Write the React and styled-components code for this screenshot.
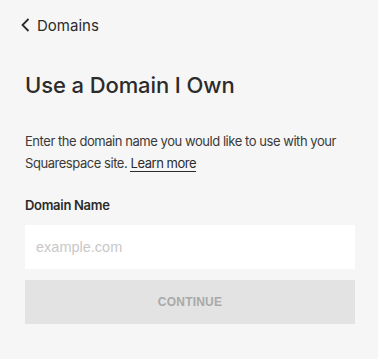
import React from "react";
import styled, { createGlobalStyle } from "styled-components";

const GlobalStyle = createGlobalStyle`
  html, body {
    margin: 0;
    padding: 0;
    background: #f6f6f6;
  }
  body {
    font-family: Inter, "Noto Sans", sans-serif;
    color: #2b2b2b;
  }
`;

const Page = styled.div`
  width: 378px;
  height: 359px;
  box-sizing: border-box;
  padding: 0 23px 0 25px;
  background: #f6f6f6;
`;

const BackLink = styled.a`
  display: flex;
  align-items: center;
  gap: 6px;
  margin-left: -6px;
  padding-top: 14px;
  height: 22px;
  font-size: 15px;
  color: #2b2b2b;
  text-decoration: none;
  cursor: pointer;
`;

const Title = styled.h1`
  margin: 34px 0 0;
  font-size: 22px;
  line-height: 30px;
  font-weight: 500;
  letter-spacing: -0.1px;
`;

const Description = styled.p`
  margin: 30px 0 0;
  font-size: 13px;
  line-height: 22px;
  letter-spacing: -0.45px;
  color: #3a3a3a;

  a {
    color: #2b2b2b;
    text-decoration: none;
    border-bottom: 1px solid #2b2b2b;
  }
`;

const Label = styled.label`
  display: block;
  margin-top: 23px;
  font-size: 13px;
  line-height: 16px;
  font-weight: 600;
  letter-spacing: -0.3px;
  color: #2b2b2b;
`;

const Input = styled.input`
  display: block;
  box-sizing: border-box;
  width: 330px;
  height: 44px;
  margin-top: 12px;
  padding: 0 11px;
  border: none;
  outline: none;
  background: #fff;
  font-family: "Liberation Sans", Arial, sans-serif;
  font-size: 14.5px;
  color: #333;

  &::placeholder {
    color: #c8c8c8;
  }
`;

const Button = styled.button`
  display: block;
  width: 330px;
  height: 44px;
  margin-top: 11px;
  border: none;
  background: #e3e3e3;
  font-family: "Liberation Sans", Arial, sans-serif;
  font-weight: 700;
  font-size: 12px;
  letter-spacing: 0.2px;
  color: #a9a9a9;
  cursor: default;
`;

function Chevron() {
  return (
    <svg width="12" height="14" viewBox="0 0 12 14" fill="none">
      <path d="M9.5 1L3.5 7l6 6" stroke="#2b2b2b" strokeWidth="1.8" />
    </svg>
  );
}

export default function App() {
  return (
    <>
      <GlobalStyle />
      <Page>
        <BackLink>
          <Chevron />
          Domains
        </BackLink>
        <Title>Use a Domain I Own</Title>
        <Description>
          Enter the domain name you would like to use with your Squarespace
          site. <a>Learn more</a>
        </Description>
        <Label htmlFor="domain">Domain Name</Label>
        <Input id="domain" placeholder="example.com" />
        <Button disabled>CONTINUE</Button>
      </Page>
    </>
  );
}
